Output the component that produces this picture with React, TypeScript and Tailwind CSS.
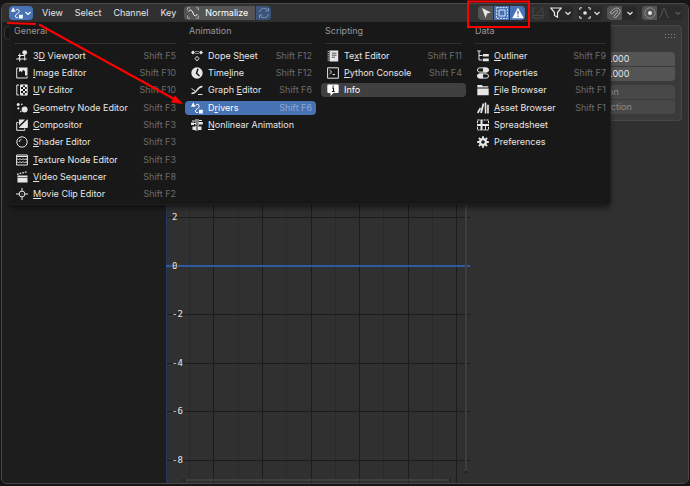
import type { ReactNode } from 'react';

type IconName =
  | 'viewport' | 'image' | 'uv' | 'geometry' | 'compositor' | 'shader' | 'texture' | 'sequencer' | 'clip'
  | 'dope' | 'timeline' | 'graph' | 'drivers' | 'nla'
  | 'text' | 'console' | 'info'
  | 'outliner' | 'properties' | 'folder' | 'asset' | 'sheet' | 'gear';

interface MenuItem {
  icon: IconName;
  label: string;
  // index of the underlined accelerator letter
  key?: number;
  shortcut?: string;
  state?: 'active' | 'hover';
}

const COLUMNS: { title: string; items: MenuItem[] }[] = [
  {
    title: 'General',
    items: [
      { icon: 'viewport', label: '3D Viewport', key: 1, shortcut: 'Shift F5' },
      { icon: 'image', label: 'Image Editor', key: 0, shortcut: 'Shift F10' },
      { icon: 'uv', label: 'UV Editor', key: 0, shortcut: 'Shift F10' },
      { icon: 'geometry', label: 'Geometry Node Editor', key: 0, shortcut: 'Shift F3' },
      { icon: 'compositor', label: 'Compositor', key: 0, shortcut: 'Shift F3' },
      { icon: 'shader', label: 'Shader Editor', key: 0, shortcut: 'Shift F3' },
      { icon: 'texture', label: 'Texture Node Editor', key: 0, shortcut: 'Shift F3' },
      { icon: 'sequencer', label: 'Video Sequencer', key: 0, shortcut: 'Shift F8' },
      { icon: 'clip', label: 'Movie Clip Editor', key: 0, shortcut: 'Shift F2' },
    ],
  },
  {
    title: 'Animation',
    items: [
      { icon: 'dope', label: 'Dope Sheet', key: 6, shortcut: 'Shift F12' },
      { icon: 'timeline', label: 'Timeline', key: 4, shortcut: 'Shift F12' },
      { icon: 'graph', label: 'Graph Editor', key: 6, shortcut: 'Shift F6' },
      { icon: 'drivers', label: 'Drivers', key: 1, shortcut: 'Shift F6', state: 'active' },
      { icon: 'nla', label: 'Nonlinear Animation', key: 0 },
    ],
  },
  {
    title: 'Scripting',
    items: [
      { icon: 'text', label: 'Text Editor', key: 2, shortcut: 'Shift F11' },
      { icon: 'console', label: 'Python Console', key: 0, shortcut: 'Shift F4' },
      { icon: 'info', label: 'Info', state: 'hover' },
    ],
  },
  {
    title: 'Data',
    items: [
      { icon: 'outliner', label: 'Outliner', key: 0, shortcut: 'Shift F9' },
      { icon: 'properties', label: 'Properties', shortcut: 'Shift F7' },
      { icon: 'folder', label: 'File Browser', key: 0, shortcut: 'Shift F1' },
      { icon: 'asset', label: 'Asset Browser', key: 0, shortcut: 'Shift F1' },
      { icon: 'sheet', label: 'Spreadsheet' },
      { icon: 'gear', label: 'Preferences' },
    ],
  },
];

const ICONS: Record<IconName, ReactNode> = {
  viewport: (
    <>
      <circle cx="8.7" cy="2.6" r="2.4" fill="currentColor" stroke="none" />
      <path d="M2 5.5h7M.2 9h10.500M3.7 3.5v8M8.7 4v6.500M4.500 5.500L2.500 9" />
    </>
  ),
  image: (
    <>
      <path d="M2.500 1H.7v10h10.500V9.500" />
      <path d="M3 .5h8.500v8H9V4.500L7.500 3 6 4.500v1L4.500 4 3 5z" fill="currentColor" stroke="none" />
    </>
  ),
  uv: (
    <>
      <path d="M3 1H.8v10H3M4.500.9h6.700v10.200H4.500z" />
      <path d="M5 1h2v2H5zM9 1h2v2H9zM7 3h2v2H7zM5 5h2v2H5zM9 5h2v2H9zM7 7h2v2H7zM5 9h2v2H5zM9 9h2v2H9z" fill="currentColor" stroke="none" />
    </>
  ),
  geometry: (
    <g fill="currentColor" stroke="none">
      <circle cx="2.200" cy="2.400" r="1.500" />
      <circle cx="2.400" cy="6.400" r="1.100" />
      <circle cx="5.800" cy="2.400" r=".8" />
      <circle cx="4.800" cy="9.600" r=".8" />
      <circle cx="8.600" cy="7.600" r="3" />
    </g>
  ),
  compositor: (
    <>
      <path d="M2.500 3.500H.7v7.800h8V9.500M11.300.7v7.800H3.200" />
      <path d="M11.300.5v8H3zM3 .5h6L3 6.500z" fill="currentColor" stroke="none" />
    </>
  ),
  shader: (
    <>
      <circle cx="6" cy="6" r="5.200" />
      <path d="M3.200 6A3 3 0 0 1 5.500 3.200" />
    </>
  ),
  texture: (
    <>
      <path d="M.6 1h10.800v10H.6zM.6 2.500h10.800" />
      <path d="M1 4.500l1.500 1.500L4 4.500 5.500 6 7 4.500 8.500 6 10 4.500 11 6M1 7.500L2.500 9 4 7.500 5.500 9 7 7.500 8.500 9 10 7.500 11 9" />
    </>
  ),
  sequencer: (
    <>
      <path d="M1.500 4.500h10v7h-10z" fill="currentColor" stroke="none" />
      <path d="M1 3.300L11 .8" strokeWidth="1.300" strokeDasharray="1.700 1" />
      <path d="M1.500 6.500h10" stroke="#181818" strokeWidth=".6" />
    </>
  ),
  clip: (
    <>
      <circle cx="6" cy="6" r="2.900" />
      <path d="M6 0v3.500M6 8.500V12M0 6h3.500M8.500 6H12" />
      <circle cx="6" cy="6" r=".6" fill="currentColor" stroke="none" />
    </>
  ),
  dope: (
    <>
      <path d="M0 2.500L2 .5l2 2-2 2zM8 2.500l2-2 2 2-2 2z" fill="currentColor" stroke="none" />
      <path d="M4.500 1.500h1M6.500 1.500h1M4.500 3.500h1M6.500 3.500h1" />
      <path d="M6 6.300L8 8.600l-2 2.300-2-2.300z" />
    </>
  ),
  timeline: (
    <>
      <circle cx="6" cy="6" r="5.700" fill="currentColor" stroke="none" />
      <path d="M7 1.800L5.500 6.300 8.500 9" stroke="#181818" strokeWidth="1.500" />
    </>
  ),
  graph: (
    <>
      <path d="M.5 9.500C7 9.500 5 3 11.500 2.500" strokeWidth="1.400" />
      <path d="M.5 4.500l3.500 2.500M7 10.500h4.500" />
    </>
  ),
  drivers: (
    <>
      <path d="M0 4.700L2.200.3l2.200 4.400zM8 7.700h3.800v3.800H8z" fill="currentColor" stroke="none" />
      <path d="M4.800 3.500C5.200 1.800 8.300 1.900 8.200 4.300S4.500 6.800 4.400 8.800 5.500 10.600 7 10.400" />
    </>
  ),
  nla: (
    <>
      <path d="M0 3.500h3V6H0zM7.500 3h4.300v2.500H7.500zM1.500 7.500H5V11H1.500zM7 7.500h3.500V11H7z" fill="currentColor" stroke="none" />
      <path d="M1 2h3.500M8 1.500h3M5 0v6.500M7 0v11.500M5 7v5M5 4.500H3" />
    </>
  ),
  text: (
    <>
      <path d="M2.500.5h8.700v11H2.500z" fill="currentColor" stroke="none" />
      <path d="M1.200.8v10.500" strokeDasharray="1.200 1" />
      <path d="M4.800 3.200h4.700M4.800 5.200h4.700M4.800 7.200h3.200" stroke="#333" strokeWidth=".8" />
    </>
  ),
  console: (
    <>
      <path d="M.6.8h10.800v10.400H.6z" />
      <path d="M2.500 3l2.200 2-2.200 2M5.500 7.500h2.500" />
    </>
  ),
  info: (
    <>
      <path d="M1.500.5h9q1.200 0 1.200 1.200v6.100q0 1.200-1.200 1.200H6.500l-3 3V9h-2Q.3 9 .3 7.800V1.700Q.3.500 1.500.500z" fill="currentColor" stroke="none" />
      <path d="M5 4h1.500v3.500M4.800 7.500h3M6.300 1.500v1.200" stroke="#222" strokeWidth="1.200" />
    </>
  ),
  outliner: (
    <>
      <path d="M.3 1h3.500M2 1v9h3.500M2 5.500h3.500" />
      <path d="M6 4h5.800v2.500H6zM6 8.600h5.800v2.700H6z" fill="currentColor" stroke="none" />
    </>
  ),
  properties: (
    <>
      <rect x=".5" y=".9" width="11" height="4.200" rx="2.100" />
      <path d="M6 .7h3.500q2.200 0 2.200 2.300T9.500 5.300H6z" fill="currentColor" stroke="none" />
      <rect x=".5" y="6.900" width="11" height="4.200" rx="2.100" />
      <path d="M6 6.700H2.500Q.3 6.700.3 9t2.200 2.300H6z" fill="currentColor" stroke="none" />
    </>
  ),
  folder: (
    <>
      <path d="M.3 4.500h11.400v6.700H.3z" fill="currentColor" stroke="none" />
      <path d="M.3 1h4.500l1 1.200h5.500v1.300H.3z" fill="currentColor" stroke="none" />
    </>
  ),
  asset: (
    <>
      <path d="M.7 11l2.800-5" strokeWidth="1.600" />
      <path d="M4 11l2.500-9.500" strokeWidth="1.800" />
      <path d="M8 .8h1v10.400H8zM10.300 3h1.200v8.200h-1.200z" fill="currentColor" strokeWidth=".6" />
    </>
  ),
  sheet: (
    <>
      <path d="M.5 1h11v10H.5z" strokeDasharray="2.200 .8" />
      <path d="M4.500 1v10M.5 6h11" strokeWidth="2" />
      <path d="M8.500 6V11" />
    </>
  ),
  gear: (
    <>
      <circle cx="6" cy="6" r="2.900" strokeWidth="2.200" />
      <path d="M6 .2v2M6 9.800v2M.2 6h2M9.800 6h2M1.900 1.900l1.400 1.400M8.700 8.700l1.400 1.400M10.100 1.900L8.700 3.300M3.300 8.700l-1.400 1.400" strokeWidth="1.900" />
    </>
  ),
};

function Svg({ children, className = 'h-3 w-3' }: { children: ReactNode; className?: string }) {
  return (
    <svg className={`shrink-0 ${className}`} viewBox="0 0 12 12" fill="none" stroke="currentColor" strokeWidth={1} aria-hidden="true">
      {children}
    </svg>
  );
}

function Chevron() {
  return (
    <svg className="h-2 w-2 shrink-0" viewBox="0 0 8 8" fill="none" stroke="currentColor" strokeWidth={1.2} aria-hidden="true">
      <path d="M1.500 3L4 5.500 6.500 3" />
    </svg>
  );
}

function Label({ text, at }: { text: string; at?: number }) {
  if (at === undefined) return <span>{text}</span>;
  return (
    <span className="whitespace-nowrap">
      {text.slice(0, at)}
      <u className="underline-offset-1">{text[at]}</u>
      {text.slice(at + 1)}
    </span>
  );
}

function rowClass(state: MenuItem['state']) {
  if (state === 'active') return 'bg-[#4772b3] text-white';
  if (state === 'hover') return 'bg-[#404040] text-white';
  return 'hover:bg-[#404040]';
}

function EditorMenu() {
  return (
    <div className="absolute left-[7px] top-[18px] z-10 grid grid-cols-[170px_131px_145px_139px] gap-x-[5px] rounded-b border border-t-0 border-[#1f1f1f] bg-[#181818] pb-px shadow-md shadow-black/40">
      {COLUMNS.map((col) => (
        <section key={col.title}>
          <h2 className="mx-1 h-[22px] border-b border-[#303030] leading-[18px] text-[#989898]">{col.title}</h2>
          <ul className="mt-[3px] grid h-[156px] grid-rows-9">
            {col.items.map((item) => (
              <li key={item.label} className="flex items-center">
                <button
                  type="button"
                  className={`flex h-[14px] w-full items-center gap-[5px] rounded-sm pl-1.5 pr-1 text-left ${rowClass(item.state)}`}
                >
                  <Svg>{ICONS[item.icon]}</Svg>
                  <Label text={item.label} at={item.key} />
                  {item.shortcut && (
                    <span className={`ml-auto ${item.state === 'active' ? 'text-[#8fa9d0]' : 'text-[#6c6c6c]'}`}>{item.shortcut}</span>
                  )}
                </button>
              </li>
            ))}
          </ul>
        </section>
      ))}
    </div>
  );
}

function Header() {
  return (
    <header className="flex h-[18px] shrink-0 items-center rounded-t bg-[#303030] pl-[7px] pr-1.5">
      <button type="button" aria-label="Editor type" className="flex h-[14px] w-6 items-center justify-center gap-px rounded-sm bg-[#4772b3] text-white">
        <Svg>{ICONS.drivers}</Svg>
        <Chevron />
      </button>
      <nav className="ml-[9px] flex gap-3">
        <button type="button">View</button>
        <button type="button">Select</button>
        <button type="button">Channel</button>
        <button type="button">Key</button>
      </nav>
      <button type="button" className="ml-2 flex h-[14px] w-[71px] items-center gap-1.5 rounded-l-sm bg-[#545454] pl-[3px] text-white">
        <Svg>
          <path d="M.6 3.500V.8H3M9 .8h2.400v2.700M.6 8.500v2.700H3M9 11.200h2.400V8.500" stroke="#aaa" />
          <path d="M1.500 4.500L3.500 3C6 3 6 9 8.500 9L10.500 7" />
        </Svg>
        Normalize
      </button>
      <button type="button" aria-label="Auto normalize" className="ml-px flex h-[14px] w-[15px] items-center justify-center rounded-r-sm bg-[#3b5378] text-[#7d92b3]">
        <Svg>
          <path d="M1.500 5a4.600 4.600 0 0 1 8.500-1.500M10.500 1v3h-3M10.500 7A4.600 4.600 0 0 1 2 8.500M1.500 11V8h3" />
        </Svg>
      </button>

      <div className="ml-auto flex h-[14px] items-center">
        <button type="button" aria-label="Only selected" className="flex h-[14px] w-[15px] items-center justify-center rounded-l-sm bg-[#545454]">
          <Svg><path d="M2 1l9 4.500-3.800 1L5.500 11z" fill="currentColor" stroke="none" /></Svg>
        </button>
        <button type="button" aria-label="Show hidden" className="ml-px flex h-[14px] w-[15px] items-center justify-center bg-[#4772b3] text-[#dce6f5]">
          <Svg>
            <path d="M.6.6h10.800v10.800H.6z" strokeDasharray="2 1" />
            <path d="M3 3h6v6H3z" />
          </Svg>
        </button>
        <button type="button" aria-label="Show errors" className="ml-px flex h-[14px] w-[15px] items-center justify-center rounded-r-sm bg-[#4772b3] text-white">
          <Svg>
            <path d="M6 .5L11.800 11.200H.2z" fill="currentColor" stroke="none" />
            <path d="M6 3.800v3.700M6 8.500V10" stroke="#4772b3" strokeWidth="1.300" />
          </Svg>
        </button>
        <button type="button" aria-label="Ghost curves" className="ml-[5px] flex h-[14px] w-[15px] items-center justify-center text-[#484848]">
          <Svg><path d="M3 1H1v10h10V3M1 8.500h10M4 8l7-7M8 1h3" /></Svg>
        </button>
        <button type="button" aria-label="Filters" className="ml-1 flex h-[14px] w-6 items-center justify-center gap-0.5 rounded-sm bg-[#282828]">
          <Svg><path d="M.8 1h10.400L7.500 5.500v4.800L4.500 8.500v-3z" strokeWidth="1.200" /></Svg>
          <Chevron />
        </button>
        <button type="button" aria-label="Pivot point" className="ml-[5px] flex h-[14px] w-6 items-center justify-center gap-0.5 rounded-sm bg-[#282828]">
          <Svg>
            <path d="M3 .8H.8V3M9 .8h2.200V3M3 11.200H.8V9M9 11.200h2.200V9" />
            <circle cx="6" cy="6" r="1.800" fill="currentColor" stroke="none" />
          </Svg>
          <Chevron />
        </button>
        <button type="button" aria-label="Snap" className="ml-[5px] flex h-[14px] w-[15px] items-center justify-center rounded-l-sm bg-[#545454] text-[#b0b0b0]">
          <Svg>
            <path d="M1 5.500l4-3.500c4-3 8 1.500 5 5l-3.500 4-1.700-1.700L8 5.500C9.500 4 8 2.500 6.500 3.800L2.700 7.200z" />
          </Svg>
        </button>
        <button type="button" aria-label="Snap to" className="flex h-[14px] w-[15px] items-center justify-center rounded-r-sm bg-[#282828]">
          <Chevron />
        </button>
        <button type="button" aria-label="Proportional editing" className="ml-[5px] flex h-[14px] w-[15px] items-center justify-center rounded-l-sm bg-[#545454]">
          <Svg>
            <circle cx="6" cy="6" r="5.200" stroke="#888" />
            <circle cx="6" cy="6" r="2" fill="currentColor" stroke="none" />
          </Svg>
        </button>
        <button type="button" aria-label="Falloff" className="flex h-[14px] w-[25px] items-center justify-center gap-1 rounded-r-sm bg-[#2b2b2b] text-[#5c5c5c]">
          <Svg><path d="M.5 11C4 11 4 1.500 6 1.500S8 11 11.500 11" /></Svg>
          <Chevron />
        </button>
      </div>
    </header>
  );
}

const MAJOR_X = [47, 96, 145, 193, 242, 290];
const MINOR_X = [23, 72, 120, 169, 217, 266];
const LEVELS = [
  { y: 195, text: '2' },
  { y: 244, text: '0' },
  { y: 292, text: '-2' },
  { y: 341, text: '-4' },
  { y: 389, text: '-6' },
  { y: 438, text: '-8' },
];

function Graph() {
  return (
    <main className="relative min-w-0 flex-1 overflow-hidden bg-[#303030]">
      <svg className="absolute inset-0 h-full w-full font-['DejaVu_Sans_Mono',monospace]" shapeRendering="crispEdges" aria-label="Driver curves">
        {MINOR_X.map((x) => (
          <rect key={x} x={x} y="0" width="1" height="100%" fill="#2a2a2a" />
        ))}
        {MAJOR_X.map((x) => (
          <rect key={x} x={x} y="0" width="1" height="100%" fill="#1c1c1c" />
        ))}
        {LEVELS.map((l) => (
          <rect key={l.y} x="0" y={l.y} width="100%" height="1" fill="#1c1c1c" />
        ))}
        <rect x="0" y="0" width="1" height="100%" fill="#20395f" />
        <rect x="0" y="243" width="100%" height="2" fill="#2f5a9e" />
        <rect x="299" y="0" width="2" height="449" fill="#3e3e3e" />
        <rect x="19" y="457" width="264" height="2" fill="#3e3e3e" />
        <rect x="17" y="457" width="2" height="2" fill="#1c1c1c" />
        <rect x="283" y="457" width="2" height="2" fill="#1c1c1c" />
        <rect x="299" y="449" width="2" height="2" fill="#1c1c1c" />
        {LEVELS.map((l) => (
          <text key={l.text} x="6" y={l.y + 3} fill="#e6e6e6" stroke="#303030" strokeWidth="2" paintOrder="stroke">
            {l.text}
          </text>
        ))}
      </svg>
    </main>
  );
}

function Sidebar() {
  return (
    <aside className="w-[218px] shrink-0 bg-[#303030] pl-1 pr-1.5 pt-[3px]">
      <section className="rounded border border-[#464646] bg-[#3a3a3a] px-1.5 pb-1.5">
        <div className="flex h-[26px] items-start justify-end pt-[7px]">
          <svg className="h-1.5 w-2.5" viewBox="0 0 10 6" fill="#888" aria-hidden="true">
            <path d="M0 1h1v1H0zM3 1h1v1H3zM6 1h1v1H6zM9 1h1v1H9zM0 4h1v1H0zM3 4h1v1H3zM6 4h1v1H6zM9 4h1v1H9z" />
          </svg>
        </div>
        <div className="ml-auto grid w-[116px] gap-px">
          <input aria-label="Cursor X" defaultValue="0.000" className="h-[14px] w-full rounded-t-sm bg-[#545454] text-center text-[#e6e6e6]" />
          <input aria-label="Cursor Y" defaultValue="0.000" className="h-[14px] w-full rounded-b-sm bg-[#545454] text-center text-[#e6e6e6]" />
        </div>
        <div className="mt-1 grid gap-px text-[#8c8c8c]">
          <button type="button" disabled className="h-[14px] rounded-t-sm bg-[#484848] leading-[14px]">Cursor to Selection</button>
          <button type="button" disabled className="h-[14px] rounded-b-sm bg-[#484848] leading-[14px]">Cursor Value to Selection</button>
        </div>
      </section>
    </aside>
  );
}

// red pointer marks drawn over the editor
function Annotations() {
  return (
    <svg className="pointer-events-none absolute inset-0 z-20 h-full w-full" fill="none" stroke="#f00" strokeWidth={2} aria-hidden="true">
      <path d="M7 23l29 1" />
      <path d="M39 24.500L176 100" />
      <path d="M183 104l-12-1.500 4-7z" fill="#f00" stroke="none" />
      <path d="M468 1.500h61v25.500h-61z" />
    </svg>
  );
}

export default function App() {
  return (
    <div className="relative flex min-h-screen flex-col bg-[#161616] px-px pb-0.5 pt-[3px] font-['Inter',sans-serif] text-[9px] leading-[14px] text-[#e6e6e6]">
      <div className="relative flex flex-1 flex-col overflow-hidden rounded-md border border-[#484848] bg-[#303030]">
        <Header />
        <EditorMenu />
        <div className="flex flex-1">
          <aside className="w-[164px] shrink-0 bg-[#1d1d1d] px-0.5 pt-1">
            <input aria-label="Search channels" className="h-[14px] w-full rounded-sm border border-[#3a3a3a] bg-[#181818] px-4" />
          </aside>
          <Graph />
          <Sidebar />
        </div>
      </div>
      <Annotations />
    </div>
  );
}
